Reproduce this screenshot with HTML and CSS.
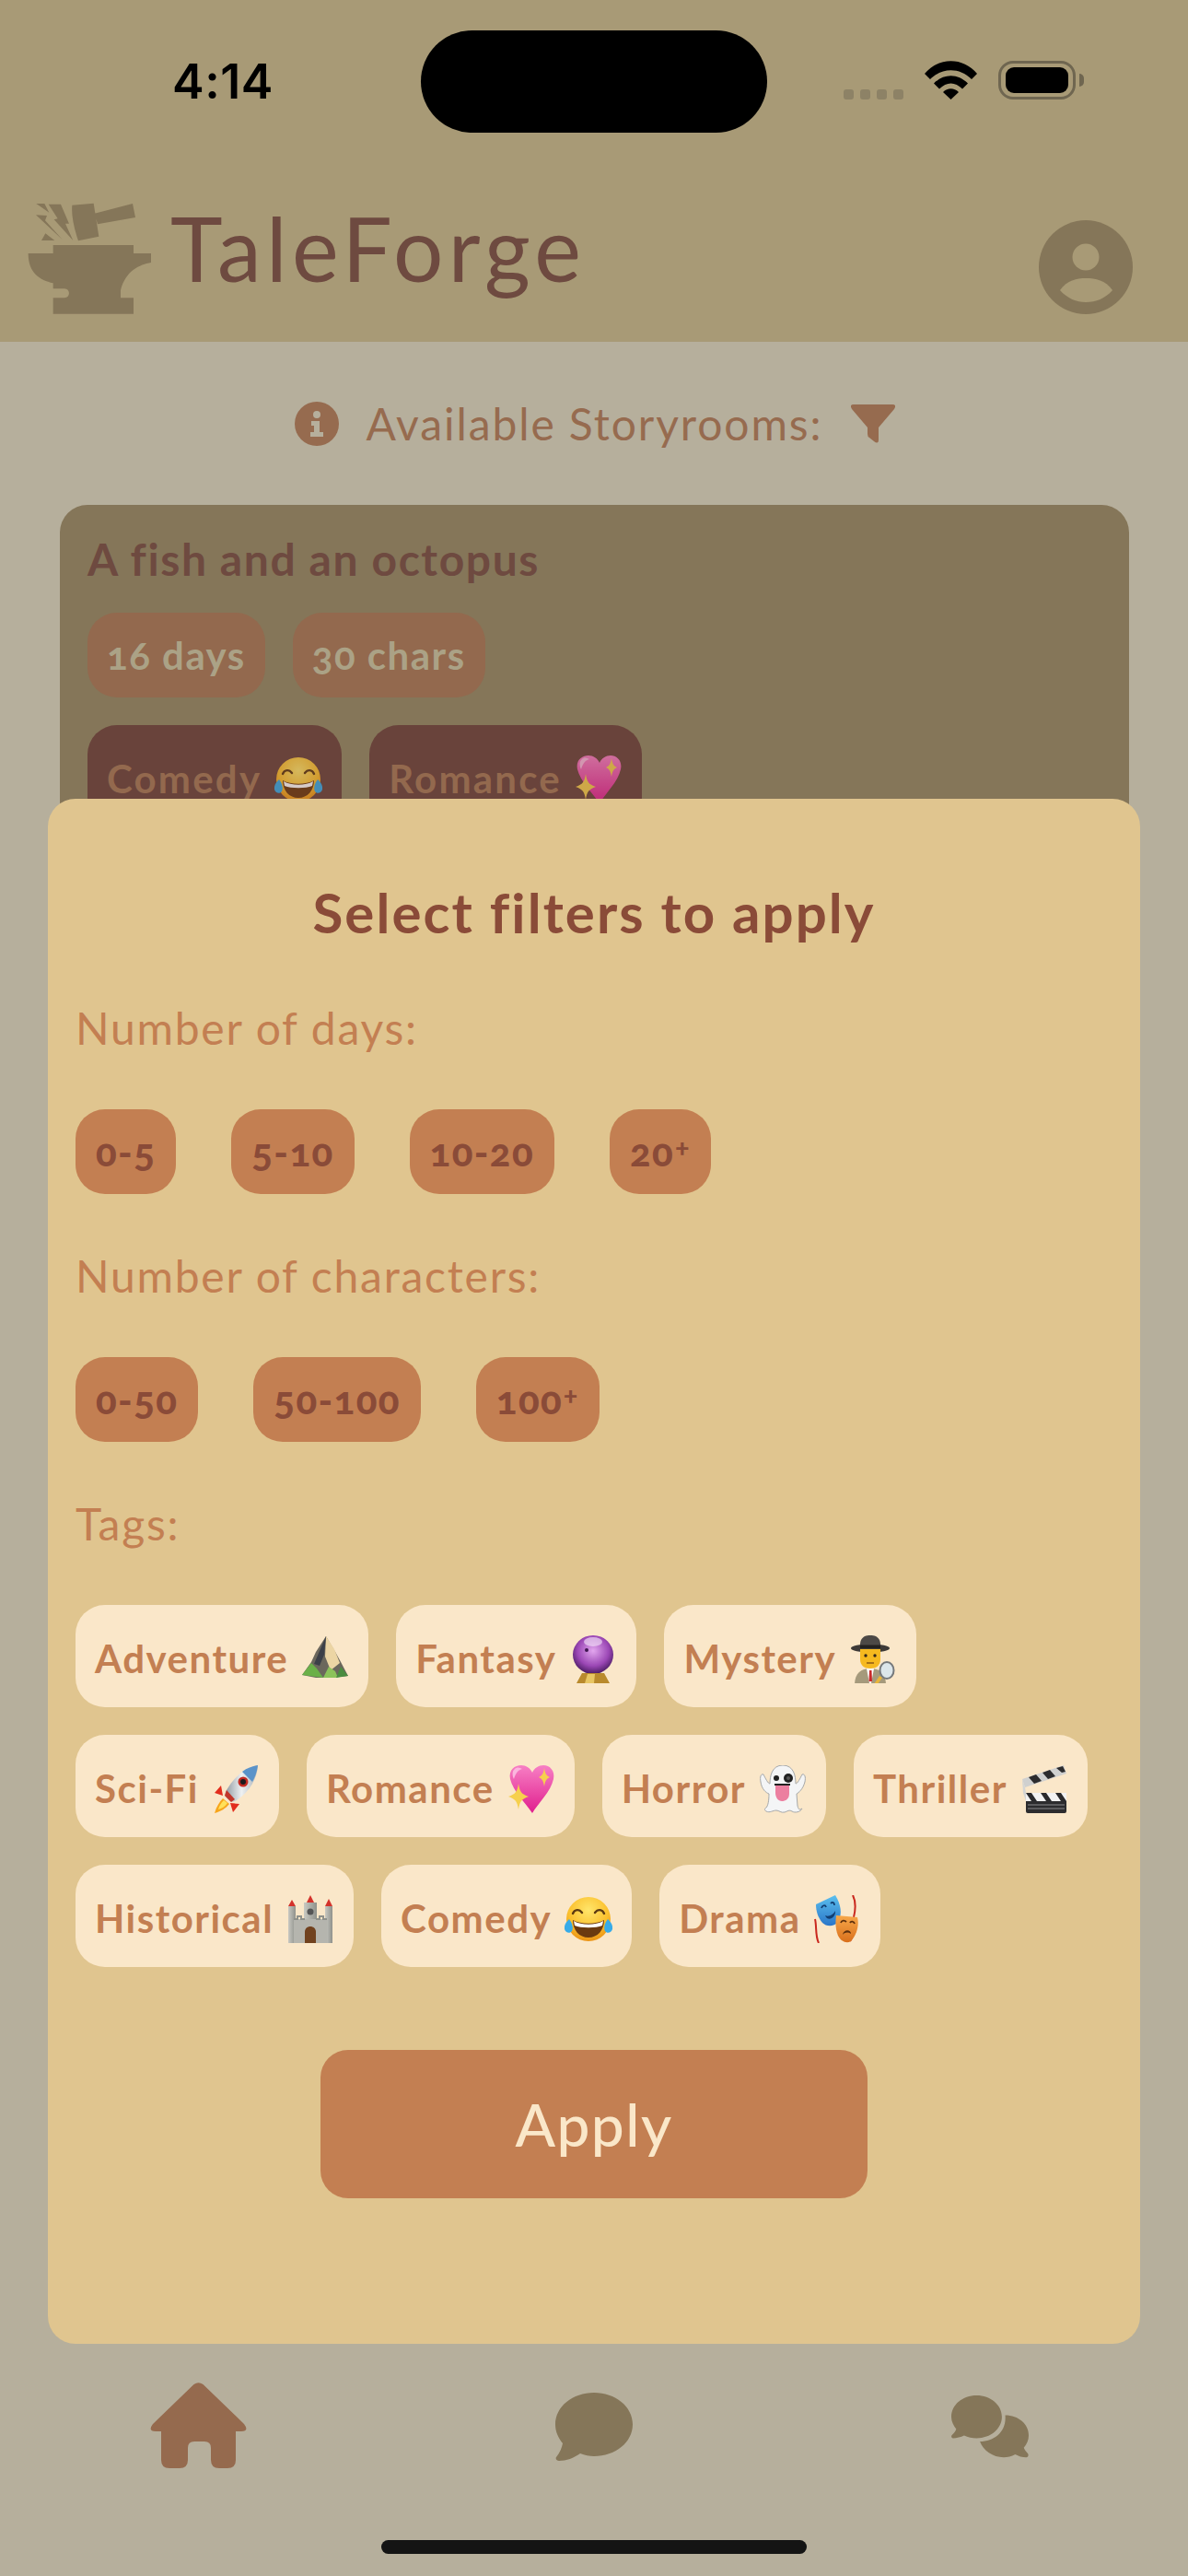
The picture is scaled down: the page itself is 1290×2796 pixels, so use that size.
FILE: index.html
```html
<!DOCTYPE html>
<html lang="en">
<head>
<meta charset="utf-8">
<title>TaleForge</title>
<link rel="stylesheet" href="styles.css">
</head>
<body>
<svg class="sprite" aria-hidden="true">
  <defs>
    <radialGradient id="gFace" cx="50%" cy="30%" r="75%"><stop offset="0" stop-color="#ffe66b"/><stop offset=".6" stop-color="#fbc02d"/><stop offset="1" stop-color="#e88a10"/></radialGradient>
    <linearGradient id="gHeart" x1="0" y1="0" x2="0" y2="1"><stop offset="0" stop-color="#f77fc4"/><stop offset="1" stop-color="#e01f8e"/></linearGradient>
    <radialGradient id="gBall" cx="50%" cy="40%" r="60%"><stop offset="0" stop-color="#e2a6ee"/><stop offset=".65" stop-color="#9b47b5"/><stop offset="1" stop-color="#4b1c63"/></radialGradient>
    <linearGradient id="gMetal" x1="0" y1="0" x2="1" y2="0"><stop offset="0" stop-color="#8f98a0"/><stop offset=".5" stop-color="#eef1f2"/><stop offset="1" stop-color="#a9b0b5"/></linearGradient>
    <linearGradient id="gStone" x1="0" y1="0" x2="1" y2="0"><stop offset="0" stop-color="#c9c9c2"/><stop offset="1" stop-color="#8f918b"/></linearGradient>
    <linearGradient id="gBlue" x1="0" y1="0" x2="0" y2="1"><stop offset="0" stop-color="#5cc0ee"/><stop offset="1" stop-color="#2a76c8"/></linearGradient>
    <linearGradient id="gOrange" x1="0" y1="0" x2="0" y2="1"><stop offset="0" stop-color="#f7a84a"/><stop offset="1" stop-color="#d9701c"/></linearGradient>

    <symbol id="e-mountain" viewBox="0 0 52 52">
      <path d="M27 1 L37 18 L42 27 L51 44 L34 46 L16 46 L1 43 L11 29 L16 18Z" fill="#6b675c"/>
      <path d="M27 1 L36 15 L42 30 L32 38 L26 23Z" fill="#ecd5a4"/>
      <path d="M27 1 L20 17 L14 31 L20 33 L25 21Z" fill="#3c4048"/>
      <path d="M1 43 L11 30 L17 36 L24 46Z" fill="#6bb048"/>
      <path d="M24 46 L30 34 L37 39 L40 46Z" fill="#8cc25a"/>
      <path d="M38 46 L43 34 L51 44Z" fill="#4a8c40"/>
    </symbol>
    <symbol id="e-ball" viewBox="0 0 52 52">
      <ellipse cx="26" cy="21" rx="22" ry="21" fill="url(#gBall)"/>
      <ellipse cx="26" cy="7" rx="10" ry="5" fill="#f3dff7" opacity=".65"/>
      <circle cx="19" cy="16" r="2" fill="#3e1650"/>
      <path d="M14 41 H38 L44 52 H8Z" fill="#b98a2c"/>
      <path d="M20 42 H28 L27 52 H17Z" fill="#e8c663"/>
    </symbol>
    <symbol id="e-detective" viewBox="0 0 52 52">
      <ellipse cx="23" cy="14" rx="21" ry="4.5" fill="#3d3a37"/>
      <path d="M12 14 C11 3 16 0 23 0 C30 0 35 3 34 14Z" fill="#4c4946"/>
      <path d="M12 10.500 H34 V14 H12Z" fill="#23211f"/>
      <path d="M12 15 H34 V26 C34 33 29 36 23 36 C17 36 12 33 12 26Z" fill="#f6b91f"/>
      <circle cx="18" cy="22" r="1.700" fill="#33261a"/><circle cx="28" cy="22" r="1.700" fill="#33261a"/>
      <path d="M19 30 H27" stroke="#8c5a14" stroke-width="1.500"/>
      <path d="M6 54 C6 42 12 36 23 36 C34 36 40 42 40 54Z" fill="#a59a7c"/>
      <path d="M19 36 L27 36 L24 52 H22Z" fill="#fff"/>
      <path d="M22 38 H24.500 L25 50 H21.500Z" fill="#c92a2a"/>
      <ellipse cx="41" cy="38" rx="7.500" ry="9" fill="#dce6ea" stroke="#76797b" stroke-width="2"/>
      <path d="M36 46 L31 53 H27 L33 44Z" fill="#e8b53a"/>
    </symbol>
    <symbol id="e-rocket" viewBox="0 0 52 52">
      <path d="M12 36 C8 40 5 45 3 52 C10 50 15 47 19 42Z" fill="#f7a61c"/>
      <path d="M13 38 C10 41 8 44 7 48 C11 47 14 45 17 41Z" fill="#ffe15a"/>
      <path d="M10 22 L3 30 L12 33 Z" fill="#e22d1d"/>
      <path d="M30 42 L23 51 L20 41 Z" fill="#e22d1d"/>
      <path d="M50 0 C38 2 26 10 16 27 C14 31 14 33 16 35 L19 38 C21 40 24 40 27 38 C42 28 49 14 50 0Z" fill="url(#gMetal)"/>
      <path d="M50 0 C44 1 38 3 33 7 L44 18 C47 13 49 7 50 0Z" fill="#5a93c9"/>
      <circle cx="34" cy="18" r="5.500" fill="#c22a22"/><circle cx="34" cy="18" r="3" fill="#1b1b1d"/>
      <path d="M16 27 L25 37 L21 40 L14 33Z" fill="#c2362a"/>
    </symbol>
    <symbol id="e-heart" viewBox="0 0 52 52">
      <path d="M27 52 C19 40 6 28 3 15 C1 5 8 0 15 0 C20 0 25 3 27 8 C29 3 34 0 39 0 C46 0 52 6 50 15 C47 29 34 40 27 52Z" fill="url(#gHeart)"/>
      <path d="M8 4 C5 6 5 11 7 15 C9 8 12 5 16 4 C13 2 10 2 8 4Z" fill="#fbb6de"/>
      <path d="M40 3 C41 9 42 11 46 13 C42 15 41 17 40 23 C39 17 38 15 34 13 C38 11 39 9 40 3Z" fill="#f6d04d"/>
      <path d="M12 20 C13.500 29 15 31 23 34 C15 37 13.500 39 12 48 C10.500 39 9 37 1 34 C9 31 10.500 29 12 20Z" fill="#f6d04d"/>
    </symbol>
    <symbol id="e-ghost" viewBox="0 0 52 52">
      <path d="M26 0 C38 0 40 12 40 20 C42 20 45 14 47 10 C50 9 51 13 50 18 C48 26 43 30 41 31 L42 44 C43 48 44 49 47 47 C45 51 39 52 36 50 C33 48 31 50 28 51 C24 52 22 49 19 49 C15 49 12 52 8 50 C6 49 6 47 8 46 C10 44 11 38 11 31 C8 30 3 26 2 18 C1 13 2 9 5 10 C7 14 10 20 12 20 C12 12 14 0 26 0Z" fill="#f4f5f6" stroke="#a5a8aa" stroke-width="1"/>
      <circle cx="19" cy="14" r="3" fill="#222"/>
      <circle cx="32" cy="14" r="5" fill="#222"/><circle cx="32" cy="14" r="2" fill="#555"/>
      <path d="M18 22 H33 V31 C33 38 27 39 25 39 C21 39 18 35 18 30Z" fill="#ec7fa0"/>
      <path d="M17 21 H34" stroke="#222" stroke-width="2"/>
    </symbol>
    <symbol id="e-clapper" viewBox="0 0 52 52">
      <path d="M2 15 L47 0 L50 9 L5 24Z" fill="#cfd0cf"/>
      <path d="M9 13 L17 10 L23 17 L15 20Z M24 8 L32 5 L38 12 L30 15Z M39 3 L46 1 L49 7 L45 8Z" fill="#2c2c2e"/>
      <rect x="6" y="30" width="44" height="9" fill="#f2f2f2"/>
      <path d="M6 30 H12 L18 39 H12Z M22 30 H28 L34 39 H28Z M38 30 H44 L50 39 H44Z" fill="#2a2a2c"/>
      <path d="M6 39 H50 V50 Q50 52 48 52 H8 Q6 52 6 50Z" fill="#2c2c2e"/>
      <path d="M8 43 H48 M8 47 H48" stroke="#8a8a8c" stroke-width="1.200"/>
      <path d="M2 15 L5 24 L6 30 L6 39 L3 30Z" fill="#d4d5d4"/>
    </symbol>
    <symbol id="e-castle" viewBox="0 0 52 52">
      <path d="M26 0 L30 8 H22Z M6 5 L10 12 H2Z M46 4 L50 12 H42Z" fill="#d3322b"/>
      <rect x="2" y="12" width="8" height="40" fill="url(#gStone)"/>
      <rect x="42" y="12" width="8" height="40" fill="url(#gStone)"/>
      <rect x="19" y="8" width="14" height="30" fill="url(#gStone)"/>
      <rect x="8" y="26" width="36" height="26" fill="#b5b5ae"/>
      <path d="M8 26 h4 v-3 h4 v3 h4 M32 26 h4 v-3 h4 v3 h4" fill="none" stroke="#8f918b" stroke-width="2"/>
      <circle cx="26" cy="18" r="3.500" fill="#555"/>
      <path d="M20 52 V40 C20 36 23 34 26 34 C29 34 32 36 32 40 V52Z" fill="#71421f"/>
    </symbol>
    <symbol id="e-laugh" viewBox="0 0 52 52">
      <circle cx="26" cy="26" r="24" fill="url(#gFace)"/>
      <path d="M9 20 C11 15 16 15 19 19 M33 19 C36 15 41 15 43 20" fill="none" stroke="#5c3a12" stroke-width="2.400" stroke-linecap="round"/>
      <path d="M9 27 C18 32 34 32 43 27 C43 38 36 46 26 46 C16 46 9 38 9 27Z" fill="#6b3a10"/>
      <path d="M10 28 C18 33 34 33 42 28 L41 33 C34 36 18 36 11 33Z" fill="#fff"/>
      <path d="M5 26 C8 30 10 35 8 39 C6 42 1 41 0 37 C-1 33 2 29 5 26Z" fill="#37abe8"/>
      <path d="M47 26 C44 30 42 35 44 39 C46 42 51 41 52 37 C53 33 50 29 47 26Z" fill="#37abe8"/>
    </symbol>
    <symbol id="e-masks" viewBox="0 0 52 52">
      <path d="M43 0 C47 8 46 16 44 24 M2 26 C4 34 2 44 6 52 M44 28 C46 36 44 44 40 50" fill="none" stroke="#c9281e" stroke-width="2"/>
      <path d="M3 10 L24 0 C30 10 32 20 27 29 C22 35 14 34 10 30 C5 24 3 17 3 10Z" fill="url(#gBlue)"/>
      <path d="M9 14 C10 11 13 10 14 13 M19 9 C21 7 23 8 23 11" fill="none" stroke="#123f73" stroke-width="1.800"/>
      <path d="M13 22 C17 24 22 21 24 17 C25 24 16 30 13 22Z" fill="#123f73"/>
      <path d="M25 22 L48 24 C50 32 48 42 41 50 C36 53 30 50 27 44 C24 37 24 29 25 22Z" fill="url(#gOrange)"/>
      <path d="M30 30 C31 27 34 27 36 29 M40 30 C41 28 44 28 45 31" fill="none" stroke="#5c2f0d" stroke-width="1.800"/>
      <path d="M32 43 C33 37 41 37 41 42 C38 40 35 40 32 43Z" fill="#5c2f0d"/>
    </symbol>
  </defs>
</svg>

<div class="phone">
  <header class="topbar">
    <div class="status">
      <div class="status-time">4:14</div>
      <div class="island"></div>
      <div class="status-icons">
        <div class="signal"><i></i><i></i><i></i><i></i></div>
        <svg class="wifi" viewBox="0 0 57 42"><path d="M0 14 C15 -4.500 42 -4.500 57 14 L51 20 C38 7 19 7 6 20Z M10 24.500 C21 13.500 36 13.500 47 24.500 L41 30.500 C33 22.500 24 22.500 16 30.500Z M20 34 C25 29 32 29 37 34 L28.500 42Z"/></svg>
        <div class="battery"><div class="battery-level"></div></div>
        <div class="battery-nub"></div>
      </div>
    </div>
    <div class="brand">
      <svg class="logo" viewBox="0 0 480 480">
        <path d="M113 198 H375 V225 H432 V255 C395 262 350 280 333 345 V370 H375 V422 H113 V370 H150 C170 370 170 340 150 340 H113 V322 C70 312 32 290 32 225 H113Z"/>
        <path d="M175 68 L245 62 L262 170 L195 184 C180 140 172 100 175 68Z M248 95 L372 63 L381 108 L258 130Z"/>
        <path d="M98 65 H138 L165 128 H153 L178 183 L116 115 L128 112Z M58 63 H85 L100 92Z M57 100 L93 102 L87 118 L143 180Z M88 160 L118 183 H75Z"/>
      </svg>
      <div class="brand-name">TaleForge</div>
      <svg class="avatar" viewBox="0 0 102 102">
        <circle cx="51" cy="51" r="51" class="avatar-disc"/>
        <circle cx="51" cy="40" r="14.500" class="avatar-cut"/>
        <path d="M23 76 C31 65 41 63 51 63 C62 63 72 65 80 76 C72 85 62 89 51 89 C41 89 31 85 23 76Z" class="avatar-cut"/>
      </svg>
    </div>
  </header>

  <main class="content">
    <div class="rooms-head">
      <svg class="info-icon" viewBox="0 0 48 48">
        <circle cx="24" cy="24" r="24" class="info-disc"/>
        <circle cx="24" cy="14" r="4" class="info-cut"/>
        <path d="M18 21 H27 V33 H31 V38 H17 V33 H21 V26 H18Z" class="info-cut"/>
      </svg>
      <span class="rooms-title">Available Storyrooms:</span>
      <svg class="funnel" viewBox="0 0 48 42"><path d="M3 0 H45 Q50 0 47 5 L30 25 V38 Q30 44 25 40 L20 36 Q18 35 18 32 V25 L1 5 Q-2 0 3 0Z"/></svg>
    </div>

    <article class="room">
      <h2 class="room-title">A fish and an octopus</h2>
      <div class="room-row">
        <span class="room-stat">16 days</span>
        <span class="room-stat">30 chars</span>
      </div>
      <div class="room-row">
        <span class="room-tag">Comedy <svg class="emoji"><use href="#e-laugh"/></svg></span>
        <span class="room-tag">Romance <svg class="emoji"><use href="#e-heart"/></svg></span>
      </div>
    </article>
  </main>

  <nav class="tabbar">
    <div class="tabs">
      <svg class="tab-home" viewBox="0 0 105 93"><path d="M47.500 2 Q52.500 -1.500 57.500 2 L102 45 Q108 53 99 53 H93 V84 Q93 93 84 93 H75 Q66 93 66 84 V71 Q66 64 59 64 H48 Q41 64 41 71 V84 Q41 93 32 93 H21 Q12 93 12 84 V53 H6 Q-3 53 3 45Z"/></svg>
      <svg class="tab-chat" viewBox="0 0 84 74"><path d="M42 0 C65 0 84 15 84 34.500 C84 54 65 69 42 69 C37 69 32 68 27 66 C20 71 12 74 4 74 C1 74 0 71 1 70 C5 65 7 60 8 55 C3 49 0 42 0 34.500 C0 15 19 0 42 0Z"/></svg>
      <svg class="tab-chats" viewBox="68 57 254 205"><path d="M151 57 C197 57 234 88 234 127 C234 166 197 197 151 197 C137 197 122 194 110 188 C100 193 85 197 74 197 C68 197 66 190 71 186 C77 180 82 174 84 167 C75 156 68 142 68 127 C68 88 105 57 151 57Z M245 122 C288 122 322 151 322 188 C322 203 316 217 306 228 C308 234 314 241 319 247 C323 252 320 260 314 260 C302 260 288 256 278 250 C265 257 252 260 240 260 C205 260 172 238 162 208 C210 208 250 175 245 122Z"/></svg>
    </div>
    <div class="home-bar"></div>
  </nav>

  <section class="sheet">
    <h1 class="sheet-title">Select filters to apply</h1>
    <h3 class="filter-label">Number of days:</h3>
    <div class="range-row">
      <span class="range">0-5</span><span class="range">5-10</span><span class="range">10-20</span><span class="range">20<span class="plus">+</span></span>
    </div>
    <h3 class="filter-label">Number of characters:</h3>
    <div class="range-row">
      <span class="range">0-50</span><span class="range">50-100</span><span class="range">100<span class="plus">+</span></span>
    </div>
    <h3 class="filter-label">Tags:</h3>
    <div class="tag-grid">
      <span class="tag">Adventure <svg class="emoji"><use href="#e-mountain"/></svg></span>
      <span class="tag">Fantasy <svg class="emoji"><use href="#e-ball"/></svg></span>
      <span class="tag">Mystery <svg class="emoji"><use href="#e-detective"/></svg></span>
      <span class="tag">Sci-Fi <svg class="emoji"><use href="#e-rocket"/></svg></span>
      <span class="tag">Romance <svg class="emoji"><use href="#e-heart"/></svg></span>
      <span class="tag">Horror <svg class="emoji"><use href="#e-ghost"/></svg></span>
      <span class="tag">Thriller <svg class="emoji"><use href="#e-clapper"/></svg></span>
      <span class="tag">Historical <svg class="emoji"><use href="#e-castle"/></svg></span>
      <span class="tag">Comedy <svg class="emoji"><use href="#e-laugh"/></svg></span>
      <span class="tag">Drama <svg class="emoji"><use href="#e-masks"/></svg></span>
    </div>
    <button class="apply">Apply</button>
  </section>
</div>
</body>
</html>
```
FILE: styles.css
```css
* { box-sizing: border-box; }
html, body { margin: 0; padding: 0; }
body { font-family: "Lato", "Liberation Sans", sans-serif; background: #b6af9c; }
h1, h2, h3 { margin: 0; }

.sprite { position: absolute; width: 0; height: 0; }

.phone {
  position: relative;
  width: 1290px;
  height: 2796px;
  overflow: hidden;
  display: flex;
  flex-direction: column;
  background: #b6af9c;
}

/* Header */
.topbar { height: 371px; background: #a89a76; padding-top: 33px; flex: none; }
.status { display: flex; align-items: center; height: 111px; }
.status-time {
  width: 457px;
  padding-left: 187px;
  font-family: "Inter", sans-serif;
  font-size: 52px;
  font-weight: 600;
  letter-spacing: 0.5px;
  color: #000;
}
.island { width: 376px; height: 111px; border-radius: 56px; background: #000; }
.status-icons { display: flex; align-items: flex-end; height: 42px; margin: -4px 0 0 83px; }
.signal { display: flex; gap: 7px; margin-right: 23px; }
.signal i { width: 11px; height: 11px; border-radius: 3px; background: #8d8266; }
.wifi { width: 57px; height: 42px; margin-right: 23px; fill: #000; }
.battery {
  width: 84px;
  height: 42px;
  border: 3px solid #6f6650;
  border-radius: 16px;
  padding: 4px 5px;
}
.battery-level { height: 100%; border-radius: 9px; background: #000; }
.battery-nub { width: 5px; height: 14px; margin: 0 0 14px 4px; border-radius: 0 7px 7px 0; background: #6f6650; }

.brand { display: flex; align-items: center; height: 160px; margin: 56px 0 0 20px; }
.logo { width: 160px; height: 160px; fill: #857659; flex: none; }
.brand-name { margin: -24px 0 0 5px; font-size: 96px; font-weight: 400; letter-spacing: 5.3px; color: #6e4a40; }
.avatar { width: 102px; height: 102px; margin: 20px 60px 0 auto; }
.avatar-disc { fill: #857659; }
.avatar-cut { fill: #a89a76; }

/* Content behind the sheet */
.content { flex: 1; min-height: 0; padding: 59px 64px 0 65px; }
.rooms-head { display: flex; align-items: center; justify-content: center; height: 60px; margin-right: -1px; }
.info-icon { width: 48px; height: 48px; }
.info-disc { fill: #966b4f; }
.info-cut { fill: #b6af9c; }
.rooms-title { margin: -2px 31px 0 30px; font-size: 48px; letter-spacing: 1.9px; color: #966b4f; }
.funnel { width: 48px; height: 42px; fill: #966b4f; }

.room { margin-top: 58px; height: 560px; padding: 27px 30px; border-radius: 30px; background: #857659; }
.room-title { padding-top: 2px; font-size: 48px; line-height: 60px; font-weight: 700; letter-spacing: 1.6px; color: #6e4a40; }
.room-row { display: flex; gap: 30px; margin-top: 30px; }
.room-title + .room-row { margin-top: 28px; }
.room-stat {
  display: flex;
  align-items: center;
  height: 92px;
  padding: 0 21px;
  border-radius: 32px;
  background: #93694e;
  color: #aba286;
  font-size: 42px;
  font-weight: 700;
  letter-spacing: 1.5px;
  font-variant-numeric: oldstyle-nums;
}
.room-tag {
  display: flex;
  align-items: center;
  gap: 14px;
  height: 111px;
  padding: 4px 21px 0;
  border-radius: 32px;
  background: #69433b;
  color: #93694e;
  font-size: 42px;
  font-weight: 700;
  letter-spacing: 2.2px;
}
.room-tag .emoji { opacity: .72; }

/* Bottom tab bar */
.tabbar { flex: none; height: 210px; }
.tabs { display: grid; grid-template-columns: repeat(3, 430px); align-items: center; justify-items: center; height: 93px; }
.tab-home { width: 105px; height: 93px; fill: #956a4e; }
.tab-chat { width: 84px; height: 74px; fill: #857659; margin-top: 3px; }
.tab-chats { width: 84px; height: 68px; fill: #857659; margin-top: 3px; }
.home-bar { width: 462px; height: 15px; margin: 78px auto 0; border-radius: 8px; background: #141414; }

/* Filter sheet */
.sheet {
  position: absolute;
  left: 52px;
  top: 867px;
  width: 1186px;
  height: 1677px;
  padding: 93px 30px 0;
  border-radius: 30px;
  background: #e0c58f;
}
.sheet-title { height: 60px; font-size: 60px; line-height: 60px; font-weight: 700; letter-spacing: 2.1px; text-align: center; color: #8a4b38; }
.sheet-title + .filter-label { margin-top: 64px; }
.filter-label { height: 62px; padding-top: 2px; margin-top: 57px; font-size: 48px; line-height: 60px; font-weight: 400; letter-spacing: 1.75px; color: #c37f52; }
.filter-label + .range-row, .filter-label + .tag-grid { margin-top: 58px; }
.range-row { display: flex; gap: 60px; }
.range {
  display: flex;
  align-items: center;
  height: 92px;
  padding: 0 22px;
  border-radius: 32px;
  background: #c37f52;
  color: #8a4b38;
  font-size: 42px;
  font-weight: 900;
  letter-spacing: 1.4px;
  font-variant-numeric: oldstyle-nums;
}
.plus { margin: -12px 0 0 1px; font-size: 28px; }
.tag-grid { display: flex; flex-wrap: wrap; gap: 30px; }
.tag {
  display: flex;
  align-items: center;
  gap: 14px;
  height: 111px;
  padding: 4px 21px 0;
  border-radius: 32px;
  background: #fae7c9;
  color: #c37f52;
  font-size: 42px;
  font-weight: 700;
  letter-spacing: 1.5px;
}
.emoji { width: 52px; height: 52px; flex: none; margin-top: 2px; }
.apply {
  display: block;
  width: 594px;
  height: 161px;
  margin: 90px auto 0;
  border: 0;
  border-radius: 30px;
  background: #c37f52;
  color: #fae7c9;
  font-family: inherit;
  font-size: 64px;
  font-weight: 500;
  letter-spacing: 1.4px;
}
```
